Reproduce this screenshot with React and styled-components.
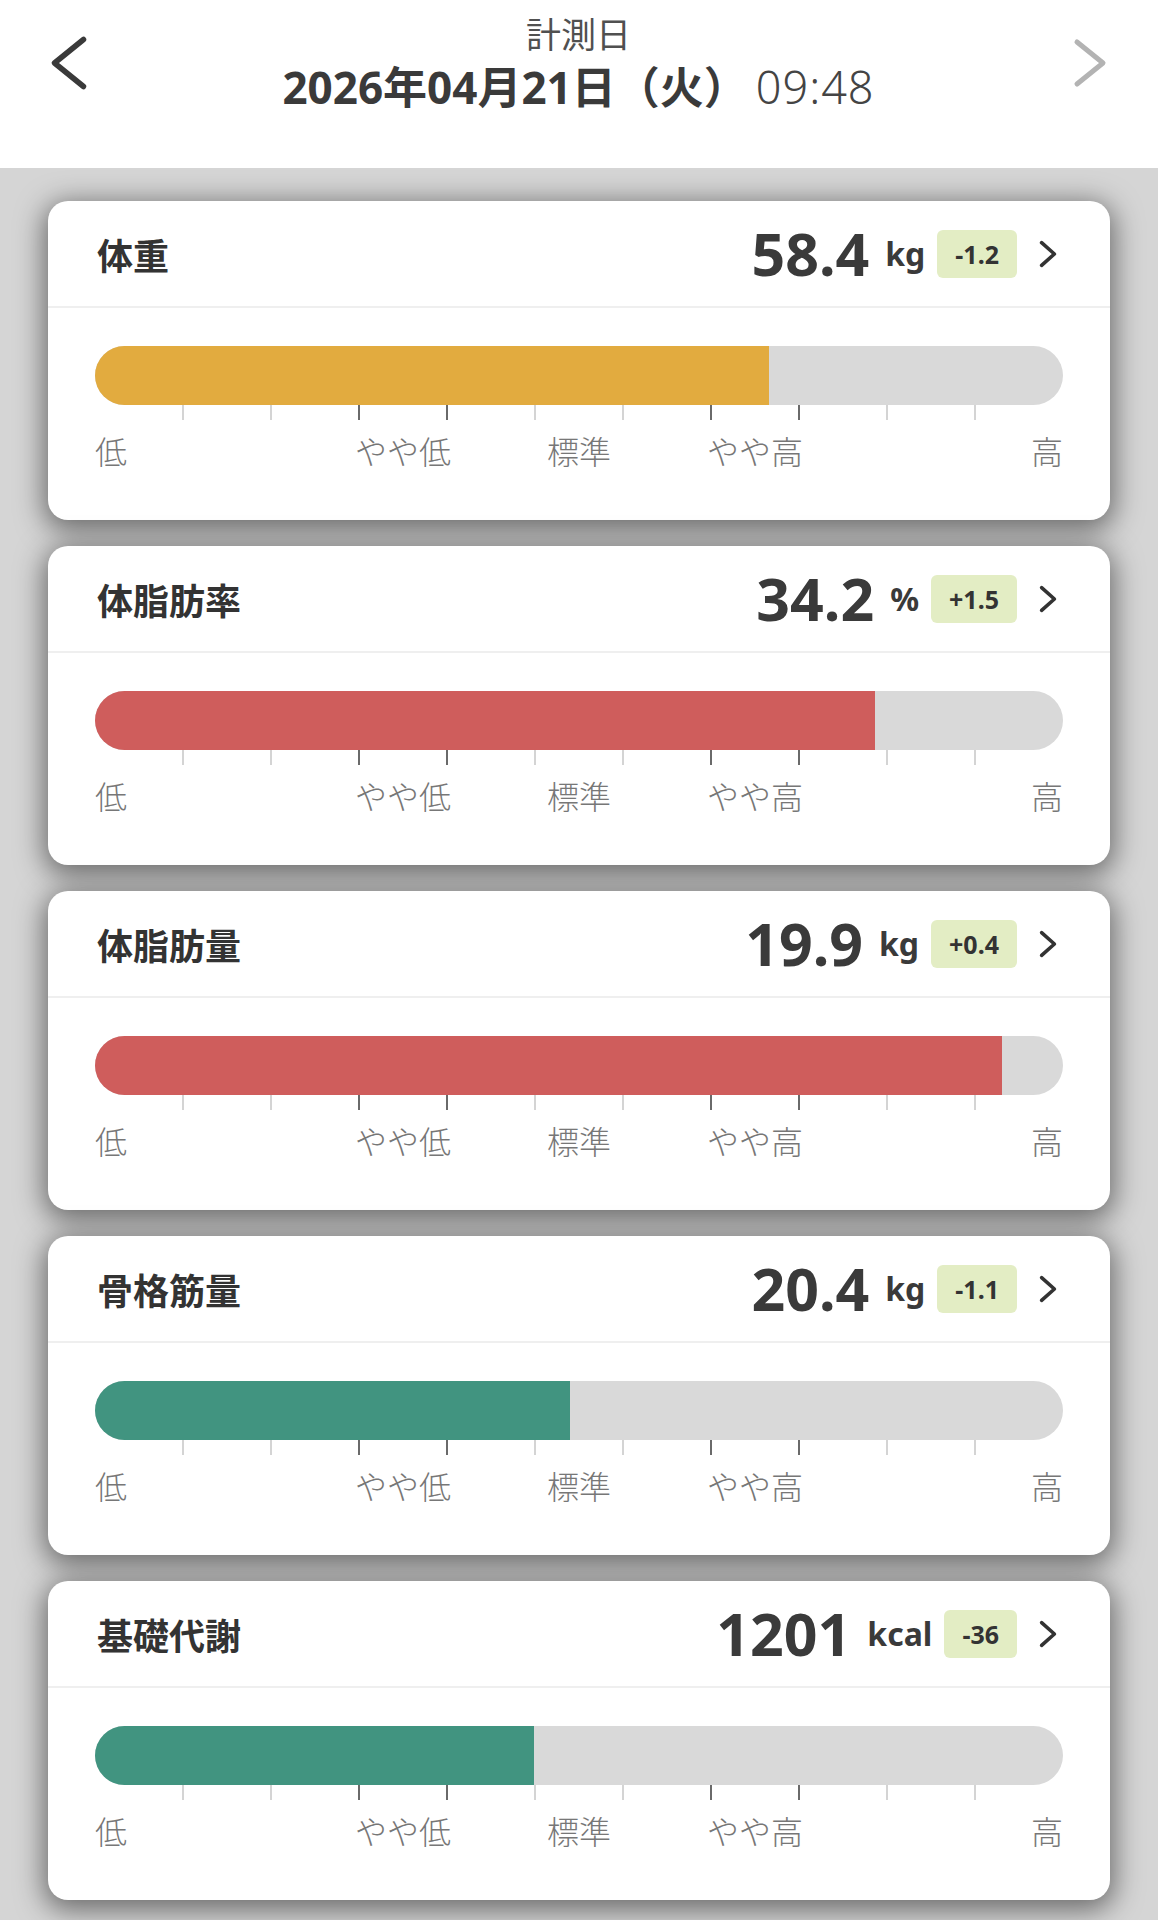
import React from 'react'
import styled, { createGlobalStyle } from 'styled-components'

const GlobalStyle = createGlobalStyle`
  body {
    margin: 0;
    background: #d5d5d5;
    font-family: "Noto Sans", "Noto Sans CJK JP", sans-serif;
    color: #3a3a3a;
  }
`

const items = [
  { title: '体重', value: '58.4', unit: 'kg', diff: '-1.2', fill: 69.6, color: '#e2ab3f' },
  { title: '体脂肪率', value: '34.2', unit: '%', diff: '+1.5', fill: 80.6, color: '#cf5d5c' },
  { title: '体脂肪量', value: '19.9', unit: 'kg', diff: '+0.4', fill: 93.7, color: '#cf5d5c' },
  { title: '骨格筋量', value: '20.4', unit: 'kg', diff: '-1.1', fill: 49.1, color: '#419480' },
  { title: '基礎代謝', value: '1201', unit: 'kcal', diff: '-36', fill: 45.3, color: '#419480' },
]

const darkTicks = [3, 4, 7, 8]

const labels = [
  { col: 1, text: '低', align: 'flex-start' },
  { col: 4, text: 'やや低', align: 'center' },
  { col: 6, text: '標準', align: 'center' },
  { col: 8, text: 'やや高', align: 'center' },
  { col: 11, text: '高', align: 'flex-end' },
]

const Chevron = ({ dir, color, w, h, sw }) => (
  <svg width={w} height={h} viewBox={`0 0 ${w} ${h}`} fill="none">
    <path
      d={dir === 'left'
        ? `M${w - sw} ${sw} L${sw} ${h / 2} L${w - sw} ${h - sw}`
        : `M${sw} ${sw} L${w - sw} ${h / 2} L${sw} ${h - sw}`}
      stroke={color}
      strokeWidth={sw}
      strokeLinecap="round"
      strokeLinejoin="round"
    />
  </svg>
)

export default function App() {
  return (
    <>
      <GlobalStyle />
      <Header>
        <NavSide>
          <Chevron dir="left" color="#3a3a3a" w={40} h={58} sw={5.5} />
        </NavSide>
        <Center>
          <Caption>計測日</Caption>
          <DateLine>
            <DateText>2026年04月21日（火）</DateText>
            <TimeText>09:48</TimeText>
          </DateLine>
        </Center>
        <NavSide $right>
          <Chevron dir="right" color="#b3b3b3" w={36} h={52} sw={5} />
        </NavSide>
      </Header>
      <List>
        {items.map((it) => (
          <Card key={it.title}>
            <CardHead>
              <Title>{it.title}</Title>
              <Right>
                <Reading>
                  <Value>{it.value}</Value>
                  <Unit>{it.unit}</Unit>
                </Reading>
                <Badge>{it.diff}</Badge>
                <Chevron dir="right" color="#333" w={20} h={30} sw={3.6} />
              </Right>
            </CardHead>
            <CardBody>
              <Track>
                <Fill $color={it.color} style={{ width: `${it.fill}%` }} />
              </Track>
              <Ticks>
                {Array.from({ length: 11 }).map((_, i) => (
                  <Tick key={i} $dark={darkTicks.includes(i + 1)} $last={i === 10} />
                ))}
              </Ticks>
              <Labels>
                {labels.map((l) => (
                  <LabelCell key={l.text} $col={l.col} $align={l.align}>
                    <Label>{l.text}</Label>
                  </LabelCell>
                ))}
              </Labels>
            </CardBody>
          </Card>
        ))}
      </List>
    </>
  )
}

const Header = styled.header`
  height: 168px;
  background: #fff;
  display: grid;
  grid-template-columns: 1fr auto 1fr;
  padding: 0 50px 0 49px;
  box-sizing: border-box;
  position: relative;
  z-index: 1;
`
const NavSide = styled.div`
  display: flex;
  justify-content: ${(p) => (p.$right ? 'flex-end' : 'flex-start')};
  align-items: flex-start;
  padding-top: ${(p) => (p.$right ? '37px' : '34px')};
`
const Center = styled.div`
  display: flex;
  flex-direction: column;
  align-items: center;
  padding-top: 12px;
`
const Caption = styled.div`
  font-family: "Noto Sans CJK JP", sans-serif;
  font-size: 35px;
  line-height: 42px;
  font-weight: 400;
  color: #505050;
`
const DateLine = styled.div`
  display: flex;
  align-items: baseline;
  gap: 8px;
  margin-top: 8px;
  line-height: 50px;
`
const DateText = styled.span`
  font-size: 44px;
  font-weight: 700;
  color: #3a3a3a;
`
const TimeText = styled.span`
  font-size: 45px;
  font-weight: 300;
  letter-spacing: 1px;
  color: #444;
`
const List = styled.main`
  display: flex;
  flex-direction: column;
  gap: 26px;
  padding: 33px 48px 40px;
`
const Card = styled.section`
  background: #fff;
  border-radius: 20px;
  box-shadow: 0 6px 28px 4px rgba(0, 0, 0, 0.5);
  overflow: hidden;
`
const CardHead = styled.div`
  height: 107px;
  box-sizing: border-box;
  display: flex;
  align-items: center;
  justify-content: space-between;
  padding: 0 52px 0 49px;
  border-bottom: 2px solid #efefef;
`
const Title = styled.div`
  font-size: 36px;
  font-weight: 700;
  color: #333;
  font-family: "Noto Sans CJK JP", sans-serif;
`
const Right = styled.div`
  display: flex;
  align-items: center;
`
const Reading = styled.div`
  display: flex;
  align-items: center;
  gap: 16px;
  margin-right: 12px;
`
const Value = styled.span`
  font-size: 59px;
  line-height: 1;
  font-weight: 700;
  color: #3a3a3a;
`
const Unit = styled.span`
  font-size: 32px;
  line-height: 1;
  font-weight: 700;
  color: #3a3a3a;
`
const Badge = styled.div`
  height: 48px;
  padding: 0 18px;
  border-radius: 6px;
  background: #e3edc4;
  display: flex;
  align-items: center;
  font-size: 25px;
  font-weight: 700;
  color: #333;
  margin-right: 21px;
`
const CardBody = styled.div`
  padding: 38px 47px 54px;
`
const Track = styled.div`
  height: 59px;
  border-radius: 30px;
  background: #d9d9d9;
  overflow: hidden;
  display: flex;
`
const Fill = styled.div`
  height: 100%;
  background: ${(p) => p.$color};
`
const Ticks = styled.div`
  display: grid;
  grid-template-columns: repeat(11, 1fr);
  height: 15px;
`
const Tick = styled.div`
  border-right: ${(p) => (p.$last ? 'none' : `2px solid ${p.$dark ? '#6a6a6a' : '#d4d4d4'}`)};
  margin-right: -1px;
`
const Labels = styled.div`
  display: grid;
  grid-template-columns: repeat(11, 1fr);
  margin-top: 14px;
  height: 32px;
`
const LabelCell = styled.div`
  grid-column: ${(p) => p.$col};
  grid-row: 1;
  display: flex;
  justify-content: ${(p) => p.$align};
  min-width: 0;
`
const Label = styled.span`
  font-family: "Noto Sans CJK JP", sans-serif;
  font-size: 32px;
  line-height: 32px;
  font-weight: 300;
  color: #777;
  white-space: nowrap;
`
